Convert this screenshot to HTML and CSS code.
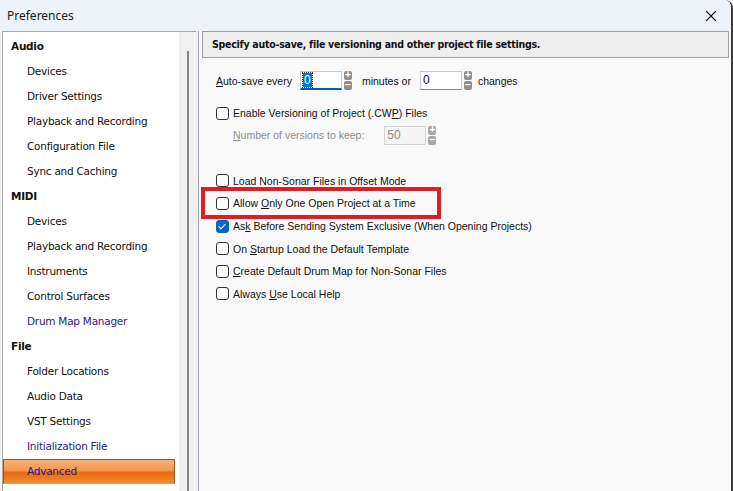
FILE: index.html
```html
<!DOCTYPE html>
<html lang="en">
<head>
    <meta charset="UTF-8">
    <title>Preferences</title>
    <link rel="stylesheet" href="styles.css">
</head>
<body>
    <div class="window">
        <div class="titlebar">
            <span class="title">Preferences</span>
            <svg class="close" width="12" height="12" viewBox="0 0 12 12">
                <path d="M1 1 L11 11 M11 1 L1 11" stroke="#1a1a1a" stroke-width="1.1" fill="none"/>
            </svg>
        </div>

        <div class="body">
            <!-- Category tree -->
            <div class="tree">
                <div class="tree-list">
                    <div class="cat">Audio</div>
                    <div class="item">Devices</div>
                    <div class="item">Driver Settings</div>
                    <div class="item">Playback and Recording</div>
                    <div class="item">Configuration File</div>
                    <div class="item">Sync and Caching</div>
                    <div class="cat">MIDI</div>
                    <div class="item">Devices</div>
                    <div class="item">Playback and Recording</div>
                    <div class="item">Instruments</div>
                    <div class="item">Control Surfaces</div>
                    <div class="item visited">Drum Map Manager</div>
                    <div class="cat">File</div>
                    <div class="item">Folder Locations</div>
                    <div class="item">Audio Data</div>
                    <div class="item">VST Settings</div>
                    <div class="item visited">Initialization File</div>
                    <div class="item visited selected">Advanced</div>
                </div>
                <div class="scrollbar"><div class="thumb"></div></div>
            </div>

            <!-- Settings page -->
            <div class="page">
                <div class="page-header">Specify auto-save, file versioning and other project file settings.</div>

                <div class="row autosave">
                    <span class="lbl-every"><u>A</u>uto-save every</span>
                    <span class="spin-field">
                        <span class="field focused"><span class="sel">0</span></span>
                        <span class="spin"><span class="plus">+</span><span class="minus">−</span></span>
                    </span>
                    <span class="lbl-minutes">minutes or</span>
                    <span class="spin-field">
                        <span class="field">0</span>
                        <span class="spin"><span class="plus">+</span><span class="minus">−</span></span>
                    </span>
                    <span class="lbl-changes">changes</span>
                </div>

                <label class="check first"><span class="box"></span><span>Enable Versioning of Project (.CW<u>P</u>) Files</span></label>

                <div class="row versions">
                    <span><u>N</u>umber of versions to keep:</span>
                    <span class="spin-field disabled">
                        <span class="field">50</span>
                        <span class="spin"><span class="plus">+</span><span class="minus">−</span></span>
                    </span>
                </div>

                <div class="checks">
                    <label class="check"><span class="box"></span><span>Load Non-Sonar Files in Offset Mode</span></label>
                    <label class="check highlight"><span class="box"></span><span>Allow <u>O</u>nly One Open Project at a Time</span></label>
                    <label class="check"><span class="box checked"></span><span>As<u>k</u> Before Sending System Exclusive (When Opening Projects)</span></label>
                    <label class="check"><span class="box"></span><span>On <u>S</u>tartup Load the Default Template</span></label>
                    <label class="check"><span class="box"></span><span><u>C</u>reate Default Drum Map for Non-Sonar Files</span></label>
                    <label class="check"><span class="box"></span><span>Always <u>U</u>se Local Help</span></label>
                </div>
            </div>
        </div>
    </div>
</body>
</html>
```

FILE: styles.css
```css
body {
    margin: 0;
    padding: 0;
    width: 733px;
    height: 491px;
    overflow: hidden;
    background-color: #f0f0f0;
}
.window {
    width: 733px;
    height: 491px;
    display: flex;
    flex-direction: column;
    border-right: 2px solid #3c3c3c;
    box-sizing: border-box;
    border-top-right-radius: 8px;
    overflow: hidden;
}
.titlebar {
    height: 31px;
    flex: none;
    display: flex;
    align-items: center;
    justify-content: space-between;
    padding: 0 14px 0 7px;
    background-color: #eef2f9;
    font-family: "Noto Sans", "Open Sans", sans-serif;
    font-size: 12px;
    color: #1a1a1a;
}
.title {
    margin-top: -1px;
}
.body {
    flex: 1;
    display: flex;
    min-height: 0;
}
.tree {
    width: 194px;
    margin-left: 2px;
    display: flex;
    background: white;
    border-left: 1px solid #a8a8a8;
    border-top: 1px solid #a8a8a8;
    box-sizing: border-box;
}
.tree-list {
    flex: 1;
    padding-top: 2px;
    font-family: "DejaVu Sans", sans-serif;
    font-size: 10.5px;
    letter-spacing: -0.25px;
    color: #111;
}
.cat, .item {
    height: 25px;
    line-height: 25px;
    white-space: nowrap;
}
.cat {
    padding-left: 8px;
    font-weight: bold;
}
.item {
    padding-left: 24px;
}
.item.visited {
    color: #2b1a8a;
}
.item.selected {
    margin: 0 4px 0 0;
    padding-left: 23px;
    height: 23px;
    line-height: 22px;
    border: 1px solid #a0551a;
    border-bottom-color: #f3a01d;
    background: linear-gradient(#f6b17a 0%, #f39650 45%, #e86a12 55%, #f48a2a 100%);
}
.scrollbar {
    width: 17px;
    background-color: #f0f0f0;
    display: flex;
    justify-content: center;
    padding-top: 19px;
}
.thumb {
    width: 2px;
    background-color: #858585;
}
.page {
    flex: 1;
    margin-left: 2px;
    border-left: 1px solid #9aa0b0;
    background-color: #f9f9f9;
    font-family: "Liberation Sans", Arial, sans-serif;
    font-size: 10.5px;
    color: #111;
    display: flex;
    flex-direction: column;
    padding-left: 17px;
}
.page-header {
    margin: 0 2px 0 -14px;
    height: 25px;
    line-height: 24px;
    padding-left: 9px;
    background-color: #eeeeee;
    border: 1px solid #a0a0a0;
    font-family: "DejaVu Sans Condensed", "DejaVu Sans", sans-serif;
    font-size: 10.5px;
    font-weight: bold;
    letter-spacing: -0.25px;
    white-space: nowrap;
}
.row {
    display: flex;
    align-items: center;
}
.autosave {
    margin-top: 13px;
}
.lbl-every {
    margin-right: 8px;
}
.lbl-minutes {
    margin: 0 9px 0 10px;
}
.lbl-changes {
    margin-left: 6px;
}
.spin-field {
    display: flex;
    gap: 2px;
    align-items: center;
}
.field {
    width: 38px;
    height: 17px;
    line-height: 17px;
    border: 1px solid #c8c8c8;
    border-bottom-color: #8a8a8a;
    background: white;
    padding-left: 2px;
    font-size: 12px;
}
.field.focused {
    border-bottom: 2px solid #005fb8;
    height: 16px;
}
.sel {
    background-color: #0078d7;
    color: white;
    padding: 0 1px;
    outline: 1px dotted #333;
}
.spin {
    display: flex;
    flex-direction: column;
    gap: 1px;
    width: 8px;
}
.spin span {
    height: 9px;
    line-height: 8px;
    background-color: #8f8f8f;
    color: white;
    border-radius: 2px;
    font-size: 10px;
    font-weight: bold;
    text-align: center;
}
.check {
    display: flex;
    align-items: center;
    gap: 4px;
    height: 22.6px;
    white-space: nowrap;
}
.check .box {
    width: 11px;
    height: 11px;
    border: 1px solid #333;
    border-radius: 3px;
    background: white;
    flex: none;
}
.check .box.checked {
    background-color: #0067c0;
    border-color: #0067c0;
    position: relative;
}
.check .box.checked::after {
    content: "";
    position: absolute;
    left: 3px;
    top: 1px;
    width: 3px;
    height: 6px;
    border: solid white;
    border-width: 0 1.5px 1.5px 0;
    transform: rotate(45deg);
}
.check.first {
    margin-top: 12px;
}
.versions {
    margin-top: 1px;
    padding-left: 17px;
    color: #8d8d8d;
}
.versions .spin-field {
    margin-left: 20px;
}
.spin-field.disabled .field {
    background: #f5f5f5;
    border-color: #d4d4d4;
    color: #8d8d8d;
}
.spin-field.disabled .spin span {
    background-color: #a8a8a8;
}
.checks {
    margin-top: 25px;
}
.highlight {
    position: relative;
}
.highlight::before {
    content: "";
    position: absolute;
    left: -15px;
    top: -5px;
    width: 232px;
    height: 24px;
    border: 4px solid #e31b23;
}
```
